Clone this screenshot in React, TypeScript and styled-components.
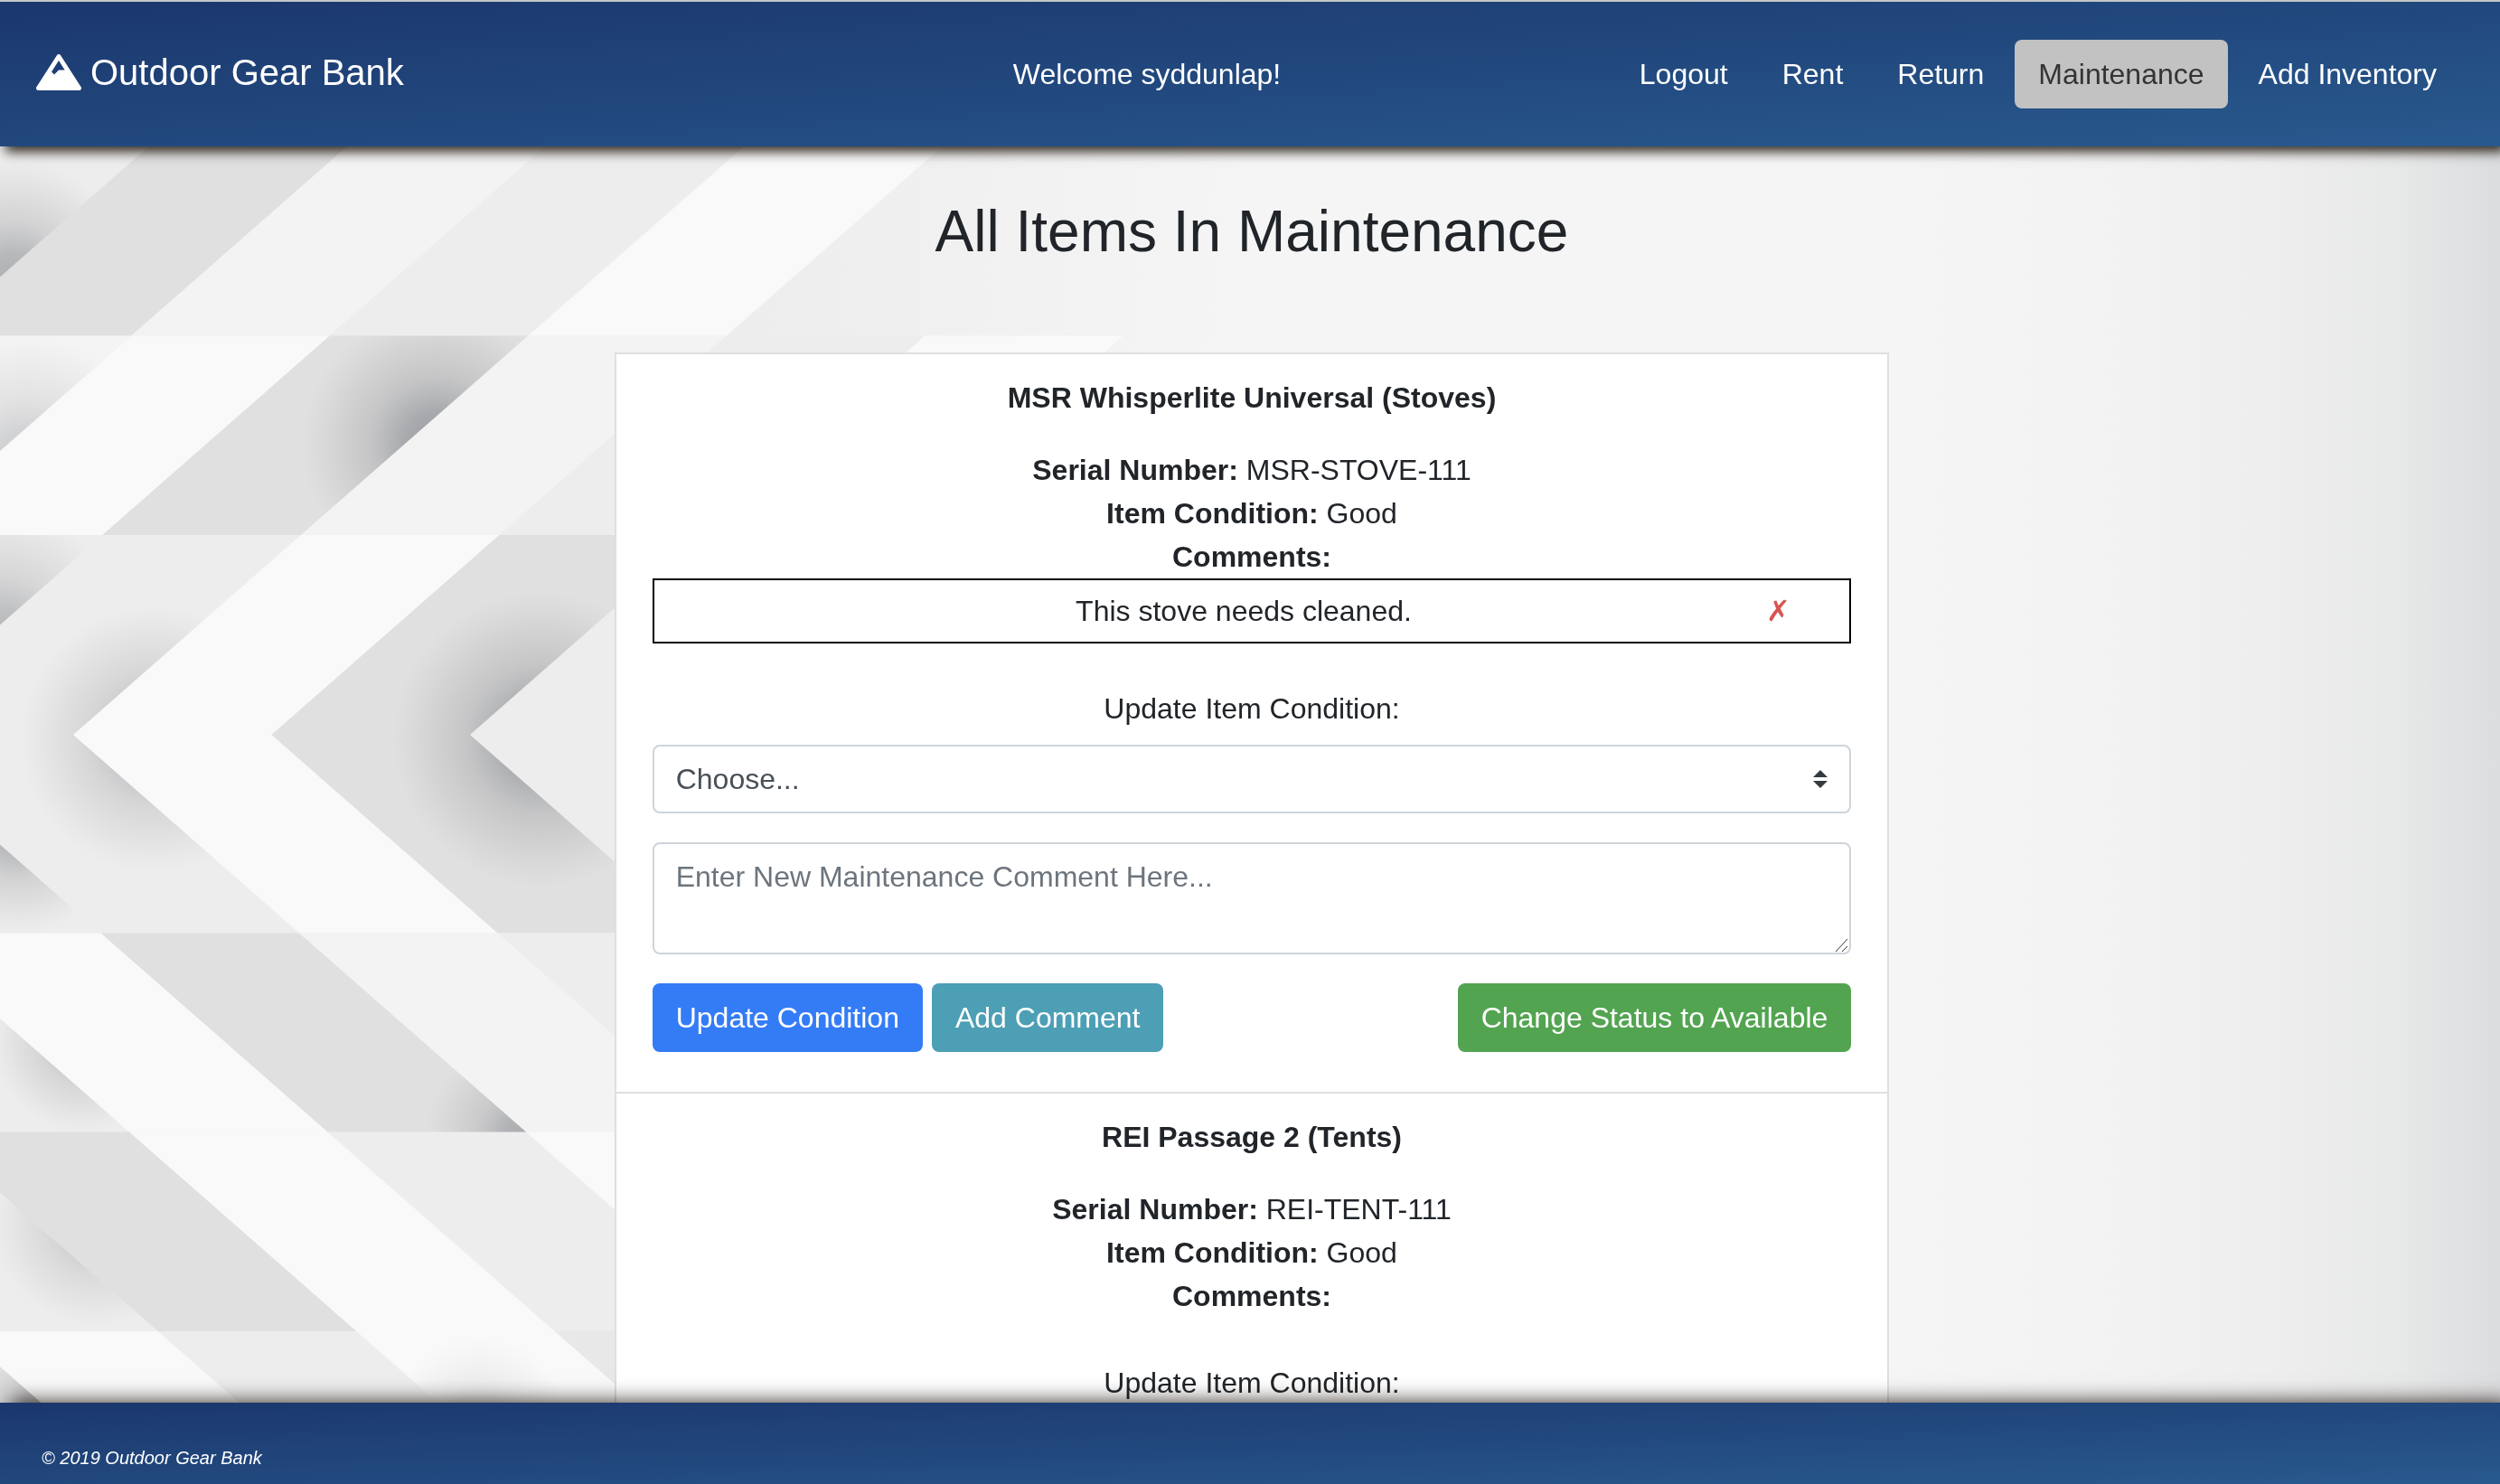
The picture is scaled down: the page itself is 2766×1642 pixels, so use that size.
import React from "react";
import styled, { createGlobalStyle } from "styled-components";
import { FaMountain } from "react-icons/fa";

const GlobalStyle = createGlobalStyle`
  *, *::before, *::after { box-sizing: border-box; }
  body {
    margin: 0;
    background: #f4f4f4;
    color: #212529;
    font-family: "Liberation Sans", Arial, Helvetica, sans-serif;
    font-size: 32px;
    line-height: 48px;
  }
`;

const brandGradient = "linear-gradient(to bottom right, #1b376d, #28598e)";

const Shell = styled.div`
  display: flex;
  flex-direction: column;
  height: 100vh;
`;

const Backdrop = styled.svg`
  position: fixed;
  inset: 0;
  z-index: -1;
  width: 100%;
  height: 100%;
`;

const Header = styled.header`
  position: relative;
  z-index: 1;
  display: flex;
  align-items: center;
  gap: 8px;
  padding: 42px 44px 42px 40px;
  border-top: 2px solid #c3c7c6;
  background: ${brandGradient};
  background-clip: padding-box;
  box-shadow: 6px 6px 12px rgba(20, 10, 0, 0.85);
  color: #fff;
`;

const Brand = styled.a`
  display: flex;
  align-items: center;
  gap: 10px;
  width: 40%;
  padding-bottom: 4px;
  color: inherit;
  font-size: 40px;
  line-height: 48px;
  text-decoration: none;
`;

const Welcome = styled.span`
  flex: 1;
`;

const Nav = styled.nav`
  display: flex;
  gap: 8px;
`;

const NavLink = styled.a<{ $active?: boolean }>`
  padding: 14px 26px;
  border-radius: 8px;
  background: ${(p) => (p.$active ? "#c2c2c2" : "transparent")};
  color: ${(p) => (p.$active ? "#343434" : "#fff")};
  text-decoration: none;
`;

const Main = styled.main`
  flex: 1;
  min-height: 0;
  padding: 56px 0 56px 4px;
  overflow-y: auto;
  scrollbar-width: none;
`;

const Title = styled.h1`
  margin: 0 0 96px;
  font-size: 64px;
  font-weight: 400;
  line-height: 76px;
  text-align: center;
`;

const ItemList = styled.ul`
  width: 51vw;
  margin: 0 auto;
  padding: 0;
  border: 2px solid #dfdfdf;
  background: #fff;
  list-style: none;
`;

const Item = styled.li`
  padding: 24px 40px 44px;
  text-align: center;

  & + & {
    border-top: 2px solid #dfdfdf;
  }
`;

const ItemName = styled.h2`
  margin: 0 0 32px;
  font-size: 32px;
  font-weight: 700;
  line-height: 48px;
`;

const Detail = styled.p`
  margin: 0;
`;

const Comment = styled.div`
  display: grid;
  grid-template-columns: 140px 1fr 158px;
  padding: 10px 0;
  border: 2px solid #000;
`;

const CommentText = styled.span`
  grid-column: 2;
`;

const RemoveButton = styled.button`
  padding: 0;
  border: 0;
  background: none;
  color: #d9534f;
  font-family: "DejaVu Sans", sans-serif;
  font-size: 32px;
  font-weight: 700;
  line-height: 48px;
  cursor: pointer;
`;

const UpdateForm = styled.form`
  display: flex;
  flex-direction: column;
  margin-top: 48px;
`;

const Label = styled.label`
  margin-bottom: 16px;
`;

const caret =
  "url(\"data:image/svg+xml,%3csvg xmlns='http://www.w3.org/2000/svg' viewBox='0 0 4 5'%3e%3cpath fill='%23343a40' d='M2 0L0 2h4zm0 5L0 3h4z'/%3e%3c/svg%3e\")";

const grip =
  "url(\"data:image/svg+xml,%3csvg xmlns='http://www.w3.org/2000/svg' viewBox='0 0 15 15'%3e%3cpath stroke='%23333' fill='none' d='M0 14L13 0M7 14L13 8'/%3e%3c/svg%3e\")";

const Select = styled.select`
  height: 76px;
  margin-bottom: 32px;
  padding: 12px 56px 12px 24px;
  border: 2px solid #ced4da;
  border-radius: 8px;
  appearance: none;
  background: #fff ${caret} no-repeat right 24px center / 16px 20px;
  color: #495057;
  font: inherit;
`;

const TextArea = styled.textarea`
  height: 124px;
  margin-bottom: 32px;
  padding: 12px 24px;
  border: 2px solid #ced4da;
  border-radius: 8px;
  background: #fff;
  color: #495057;
  font: inherit;
  resize: vertical;

  &::placeholder {
    color: #6c757d;
    opacity: 1;
  }

  &::-webkit-resizer {
    background: ${grip} no-repeat center / 15px 15px;
  }
`;

const Actions = styled.div`
  display: flex;
  gap: 10px;
`;

const tones = { primary: "#347cf6", info: "#4c9fb5", success: "#53a451" };

const Button = styled.button<{ $tone: keyof typeof tones }>`
  margin-left: ${(p) => (p.$tone === "success" ? "auto" : "0")};
  padding: 14px 26px;
  border: 0;
  border-radius: 8px;
  background: ${(p) => tones[p.$tone]};
  color: #fff;
  font: inherit;
  cursor: pointer;
`;

const Footer = styled.footer`
  position: relative;
  z-index: 1;
  padding: 46px 46px 14px;
  background: ${brandGradient};
  box-shadow: 12px 0 22px rgba(20, 10, 0, 0.9);
  color: #fff;
  font-size: 20px;
  font-style: italic;
  line-height: 30px;
`;

type Gear = {
  id: string;
  name: string;
  serial: string;
  condition: string;
  comments: string[];
};

const gear: Gear[] = [
  {
    id: "stove",
    name: "MSR Whisperlite Universal (Stoves)",
    serial: "MSR-STOVE-111",
    condition: "Good",
    comments: ["This stove needs cleaned."],
  },
  {
    id: "tent",
    name: "REI Passage 2 (Tents)",
    serial: "REI-TENT-111",
    condition: "Good",
    comments: [],
  },
];

const navLinks = ["Logout", "Rent", "Return", "Maintenance", "Add Inventory"];

// Rows of the chevron pattern; the stripes lean right above the fold and left below it.
const FOLD = 813;
const rows = [151, 371.5, 592, 813, 1032.5, 1252.5, 1473, 1693];
const edge = (k: number, y: number) => 81 + 219.5 * k + 1.14 * Math.abs(y - FOLD);

const bands: { from: number; fills: string[] }[] = [
  { from: -4, fills: ["#ededed", "#e0e0e0", "#f3f3f3", "#ededed", "#f9f9f9"] },
  { from: -4, fills: ["#f4f4f4", "#f4f4f4", "#f9f9f9", "#e0e0e0", "#f3f3f3", "#ededed", "#f9f9f9"] },
  { from: -3, fills: ["#ededed", "#ededed", "#ededed", "#f9f9f9", "#e0e0e0", "#ededed"] },
  { from: -3, fills: ["#ededed", "#ededed", "#ededed", "#f9f9f9", "#e0e0e0", "#ededed"] },
  { from: -4, fills: ["#ededed", "#ededed", "#f9f9f9", "#e0e0e0", "#f3f3f3", "#ededed"] },
  { from: -5, fills: ["#ededed", "#ededed", "#e0e0e0", "#f9f9f9", "#ededed", "#f9f9f9"] },
  { from: -6, fills: ["#e0e0e0", "#e0e0e0", "#f9f9f9", "#ededed", "#f9f9f9", "#e8e8e8"] },
];

const cell = (row: number, left: number, right: number) => {
  const top = rows[row];
  const bottom = rows[row + 1];
  return [
    [edge(left, top), top],
    [edge(right, top), top],
    [edge(right, bottom), bottom],
    [edge(left, bottom), bottom],
  ]
    .map((p) => p.join(","))
    .join(" ");
};

// Soft shadows, each clipped to the stripe it falls on.
const shades = [
  { row: 0, left: -6, right: -3, cx: 14, cy: 312, r: 135, a: 0.75 },
  { row: 1, left: -6, right: -2, cx: 30, cy: 510, r: 140, a: 0.45 },
  { row: 1, left: -1, right: 0, cx: 484, cy: 492, r: 150, a: 0.9 },
  { row: 2, left: -5, right: -1, cx: 0, cy: 710, r: 145, a: 0.65 },
  { row: 2, left: -1, right: 0, cx: 170, cy: 818, r: 148, a: 0.65 },
  { row: 3, left: -1, right: 0, cx: 170, cy: 818, r: 148, a: 0.65 },
  { row: 2, left: 1, right: 2, cx: 598, cy: 818, r: 164, a: 0.9 },
  { row: 3, left: 1, right: 2, cx: 598, cy: 818, r: 164, a: 0.9 },
  { row: 3, left: -5, right: -1, cx: 20, cy: 914, r: 118, a: 0.75 },
  { row: 4, left: -5, right: -2, cx: 92, cy: 1150, r: 102, a: 0.65 },
  { row: 4, left: -1, right: 0, cx: 586, cy: 1260, r: 116, a: 0.75 },
  { row: 5, left: -6, right: -3, cx: 106, cy: 1352, r: 116, a: 0.55 },
  { row: 6, left: -7, right: -4, cx: 40, cy: 1556, r: 60, a: 0.6 },
  { row: 6, left: -2, right: -1, cx: 530, cy: 1580, r: 100, a: 0.3 },
];

function ChevronBackdrop() {
  return (
    <Backdrop viewBox="0 0 2766 1642" preserveAspectRatio="xMinYMin slice" aria-hidden="true">
      <defs>
        <linearGradient id="haze" x1="0" x2="1">
          <stop offset="0.29" stopColor="#ededed" />
          <stop offset="0.42" stopColor="#f2f2f2" />
          <stop offset="0.5" stopColor="#f5f5f5" />
          <stop offset="0.76" stopColor="#f5f5f5" />
          <stop offset="0.85" stopColor="#f2f2f2" />
          <stop offset="0.91" stopColor="#eeeeee" />
          <stop offset="0.96" stopColor="#e7e8e8" />
          <stop offset="1" stopColor="#dcdddf" />
        </linearGradient>
        <radialGradient id="shade">
          <stop offset="0" stopColor="#7f8287" stopOpacity="0.8" />
          <stop offset="0.25" stopColor="#888b90" stopOpacity="0.7" />
          <stop offset="0.5" stopColor="#98999c" stopOpacity="0.42" />
          <stop offset="0.75" stopColor="#a0a0a0" stopOpacity="0.22" />
          <stop offset="1" stopColor="#b0b0b0" stopOpacity="0" />
        </radialGradient>
        {shades.map((s, i) => (
          <clipPath id={`stripe-${i}`} key={i}>
            <polygon points={cell(s.row, s.left, s.right)} />
          </clipPath>
        ))}
      </defs>
      <rect width="2766" height="1642" fill="url(#haze)" />
      {bands.map((band, row) =>
        band.fills.map((fill, i) => (
          <polygon
            key={`${row}-${i}`}
            points={cell(row, band.from + i, band.from + i + 1)}
            fill={fill}
          />
        ))
      )}
      {shades.map((s, i) => (
        <circle
          key={i}
          cx={s.cx}
          cy={s.cy}
          r={s.r}
          fill="url(#shade)"
          opacity={s.a}
          clipPath={`url(#stripe-${i})`}
        />
      ))}
    </Backdrop>
  );
}

function GearItem({ item }: { item: Gear }) {
  return (
    <Item>
      <ItemName>{item.name}</ItemName>
      <Detail>
        <strong>Serial Number:</strong> {item.serial}
      </Detail>
      <Detail>
        <strong>Item Condition:</strong> {item.condition}
      </Detail>
      <Detail>
        <strong>Comments:</strong>
      </Detail>
      {item.comments.map((comment) => (
        <Comment key={comment}>
          <CommentText>{comment}</CommentText>
          <RemoveButton type="button">✗</RemoveButton>
        </Comment>
      ))}
      <UpdateForm onSubmit={(e) => e.preventDefault()}>
        <Label htmlFor={`condition-${item.id}`}>Update Item Condition:</Label>
        <Select id={`condition-${item.id}`} defaultValue="">
          <option value="">Choose...</option>
        </Select>
        <TextArea
          aria-label="Maintenance comment"
          placeholder="Enter New Maintenance Comment Here..."
        />
        <Actions>
          <Button type="submit" $tone="primary">
            Update Condition
          </Button>
          <Button type="button" $tone="info">
            Add Comment
          </Button>
          <Button type="button" $tone="success">
            Change Status to Available
          </Button>
        </Actions>
      </UpdateForm>
    </Item>
  );
}

export default function App() {
  return (
    <>
      <GlobalStyle />
      <ChevronBackdrop />
      <Shell>
        <Header>
          <Brand href="#home">
            <FaMountain size={50} />
            Outdoor Gear Bank
          </Brand>
          <Welcome>Welcome syddunlap!</Welcome>
          <Nav>
            {navLinks.map((label) => (
              <NavLink key={label} href="#" $active={label === "Maintenance"}>
                {label}
              </NavLink>
            ))}
          </Nav>
        </Header>
        <Main>
          <Title>All Items In Maintenance</Title>
          <ItemList>
            {gear.map((item) => (
              <GearItem key={item.id} item={item} />
            ))}
          </ItemList>
        </Main>
        <Footer>© 2019 Outdoor Gear Bank</Footer>
      </Shell>
    </>
  );
}
